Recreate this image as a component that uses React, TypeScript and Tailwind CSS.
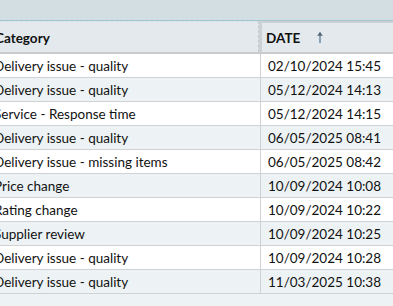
import React from "react";

const rows: [string, string][] = [
  ["Delivery issue - quality", "02/10/2024 15:45"],
  ["Delivery issue - quality", "05/12/2024 14:13"],
  ["Service - Response time", "05/12/2024 14:15"],
  ["Delivery issue - quality", "06/05/2025 08:41"],
  ["Delivery issue - missing items", "06/05/2025 08:42"],
  ["Price change", "10/09/2024 10:08"],
  ["Rating change", "10/09/2024 10:22"],
  ["Supplier review", "10/09/2024 10:25"],
  ["Delivery issue - quality", "10/09/2024 10:28"],
  ["Delivery issue - quality", "11/03/2025 10:38"],
];

export default function App() {
  return (
    <div
      className="w-[393px] h-[306px] overflow-hidden bg-[#edf2f4] text-[#111] text-[13.5px]"
      style={{ fontFamily: "Lato, 'Liberation Sans', sans-serif" }}
    >
      {/* toolbar strip */}
      <div className="h-[21px] bg-[#d3dee3] border-b border-[#9fc6d4]" />

      <div className="-ml-[10px] w-[420px]">
        {/* header */}
        <div className="flex h-[33px] border-b-2 border-[#c9cbcc]">
          <div className="w-[269px] bg-[#e3e9ed] border-t border-[#d9e0e3] border-r border-dashed border-r-[#c4c9cc] flex items-center pl-[5px] pt-[2px] font-bold">
            Category
          </div>
          <div className="flex-1 bg-[#e3e9ed] border-t-2 border-l-[3px] border-[#cdd1d3] flex items-center pl-[4px] pt-[2px] font-bold">
            DATE
            <svg width="8" height="12" viewBox="0 0 8 12" className="ml-[16px] -mt-[3px]">
              <path d="M4 1.5 L4 12" stroke="#6f8aa3" strokeWidth="1.5" />
              <path d="M1.2 4.8 L4 1 L6.8 4.8 Z" fill="#556270" />
            </svg>
          </div>
        </div>

        {/* body */}
        {rows.map(([cat, date], i) => (
          <div
            key={i}
            className={`flex h-[24px] border-b border-[#cfd2d3] ${i % 2 === 0 ? "bg-white" : "bg-[#edf3f5]"}`}
          >
            <div className="w-[271px] border-r border-[#cfd2d3] flex items-center pl-[4px] pt-[2px] whitespace-nowrap">
              {cat}
            </div>
            <div className="flex-1 flex items-center pl-[7px] pt-[2px] whitespace-nowrap">{date}</div>
          </div>
        ))}
      </div>
    </div>
  );
}
